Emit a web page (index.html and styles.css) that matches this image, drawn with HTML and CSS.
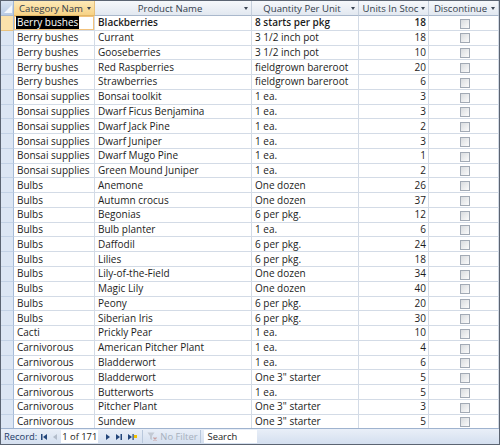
FILE: index.html
```html
<!DOCTYPE html>
<html lang="en">
<head>
  <meta charset="utf-8">
  <title>Products</title>
  <link rel="stylesheet" href="styles.css">
</head>
<body>
<div class="datasheet">
  <div class="grid-wrap">
    <table class="grid">
      <colgroup>
        <col class="c-sel"><col class="c-cat"><col class="c-prod"><col class="c-qty"><col class="c-units"><col class="c-disc">
      </colgroup>
      <thead>
        <tr>
          <th class="corner"><svg width="13" height="13" viewBox="0 0 13 13"><polygon points="11,3 11,11 3,11" fill="#f4f8fd"/></svg></th>
          <th class="active"><div class="hd"><span class="lbl">Category Nam</span><i class="drop"></i></div></th>
          <th><div class="hd"><span class="lbl">Product Name</span><i class="drop"></i></div></th>
          <th><div class="hd"><span class="lbl">Quantity Per Unit</span><i class="drop"></i></div></th>
          <th><div class="hd"><span class="lbl">Units In Stoc</span><i class="drop"></i></div></th>
          <th><div class="hd"><span class="lbl">Discontinue</span><i class="drop"></i></div></th>
        </tr>
      </thead>
      <tbody>
        <tr class="current"><td class="sel"></td><td class="cur"><span class="hilite">Berry bushes</span></td><td>Blackberries</td><td>8 starts per pkg</td><td class="num">18</td><td class="chk"><span class="box"></span></td></tr>
        <tr><td class="sel"></td><td>Berry bushes</td><td>Currant</td><td>3 1/2 inch pot</td><td class="num">18</td><td class="chk"><span class="box"></span></td></tr>
        <tr><td class="sel"></td><td>Berry bushes</td><td>Gooseberries</td><td>3 1/2 inch pot</td><td class="num">10</td><td class="chk"><span class="box"></span></td></tr>
        <tr><td class="sel"></td><td>Berry bushes</td><td>Red Raspberries</td><td>fieldgrown bareroot</td><td class="num">20</td><td class="chk"><span class="box"></span></td></tr>
        <tr><td class="sel"></td><td>Berry bushes</td><td>Strawberries</td><td>fieldgrown bareroot</td><td class="num">6</td><td class="chk"><span class="box"></span></td></tr>
        <tr><td class="sel"></td><td>Bonsai supplies</td><td>Bonsai toolkit</td><td>1 ea.</td><td class="num">3</td><td class="chk"><span class="box"></span></td></tr>
        <tr><td class="sel"></td><td>Bonsai supplies</td><td>Dwarf Ficus Benjamina</td><td>1 ea.</td><td class="num">3</td><td class="chk"><span class="box"></span></td></tr>
        <tr><td class="sel"></td><td>Bonsai supplies</td><td>Dwarf Jack Pine</td><td>1 ea.</td><td class="num">2</td><td class="chk"><span class="box"></span></td></tr>
        <tr><td class="sel"></td><td>Bonsai supplies</td><td>Dwarf Juniper</td><td>1 ea.</td><td class="num">3</td><td class="chk"><span class="box"></span></td></tr>
        <tr><td class="sel"></td><td>Bonsai supplies</td><td>Dwarf Mugo Pine</td><td>1 ea.</td><td class="num">1</td><td class="chk"><span class="box"></span></td></tr>
        <tr><td class="sel"></td><td>Bonsai supplies</td><td>Green Mound Juniper</td><td>1 ea.</td><td class="num">2</td><td class="chk"><span class="box"></span></td></tr>
        <tr><td class="sel"></td><td>Bulbs</td><td>Anemone</td><td>One dozen</td><td class="num">26</td><td class="chk"><span class="box"></span></td></tr>
        <tr><td class="sel"></td><td>Bulbs</td><td>Autumn crocus</td><td>One dozen</td><td class="num">37</td><td class="chk"><span class="box"></span></td></tr>
        <tr><td class="sel"></td><td>Bulbs</td><td>Begonias</td><td>6 per pkg.</td><td class="num">12</td><td class="chk"><span class="box"></span></td></tr>
        <tr><td class="sel"></td><td>Bulbs</td><td>Bulb planter</td><td>1 ea.</td><td class="num">6</td><td class="chk"><span class="box"></span></td></tr>
        <tr><td class="sel"></td><td>Bulbs</td><td>Daffodil</td><td>6 per pkg.</td><td class="num">24</td><td class="chk"><span class="box"></span></td></tr>
        <tr><td class="sel"></td><td>Bulbs</td><td>Lilies</td><td>6 per pkg.</td><td class="num">18</td><td class="chk"><span class="box"></span></td></tr>
        <tr><td class="sel"></td><td>Bulbs</td><td>Lily-of-the-Field</td><td>One dozen</td><td class="num">34</td><td class="chk"><span class="box"></span></td></tr>
        <tr><td class="sel"></td><td>Bulbs</td><td>Magic Lily</td><td>One dozen</td><td class="num">40</td><td class="chk"><span class="box"></span></td></tr>
        <tr><td class="sel"></td><td>Bulbs</td><td>Peony</td><td>6 per pkg.</td><td class="num">20</td><td class="chk"><span class="box"></span></td></tr>
        <tr><td class="sel"></td><td>Bulbs</td><td>Siberian Iris</td><td>6 per pkg.</td><td class="num">30</td><td class="chk"><span class="box"></span></td></tr>
        <tr><td class="sel"></td><td>Cacti</td><td>Prickly Pear</td><td>1 ea.</td><td class="num">10</td><td class="chk"><span class="box"></span></td></tr>
        <tr><td class="sel"></td><td>Carnivorous</td><td>American Pitcher Plant</td><td>1 ea.</td><td class="num">4</td><td class="chk"><span class="box"></span></td></tr>
        <tr><td class="sel"></td><td>Carnivorous</td><td>Bladderwort</td><td>1 ea.</td><td class="num">6</td><td class="chk"><span class="box"></span></td></tr>
        <tr><td class="sel"></td><td>Carnivorous</td><td>Bladderwort</td><td>One 3" starter</td><td class="num">5</td><td class="chk"><span class="box"></span></td></tr>
        <tr><td class="sel"></td><td>Carnivorous</td><td>Butterworts</td><td>1 ea.</td><td class="num">5</td><td class="chk"><span class="box"></span></td></tr>
        <tr><td class="sel"></td><td>Carnivorous</td><td>Pitcher Plant</td><td>One 3" starter</td><td class="num">3</td><td class="chk"><span class="box"></span></td></tr>
        <tr><td class="sel"></td><td>Carnivorous</td><td>Sundew</td><td>One 3" starter</td><td class="num">5</td><td class="chk"><span class="box"></span></td></tr>
      </tbody>
    </table>
  </div>

  <div class="navbar">
    <span class="nav-label">Record:</span>
    <svg class="nav-btn" width="8" height="8" viewBox="0 0 8 8"><rect x="1" y="1" width="1.5" height="6" fill="#23467a"/><polygon points="7,1 7,7 3,4" fill="#23467a"/></svg>
    <svg class="nav-btn" width="6" height="8" viewBox="0 0 6 8"><polygon points="5,1 5,7 1,4" fill="#b3bdcb"/></svg>
    <span class="nav-pos">1 of 171</span>
    <svg class="nav-btn" width="6" height="8" viewBox="0 0 6 8"><polygon points="1,1 1,7 5,4" fill="#23467a"/></svg>
    <svg class="nav-btn" width="8" height="8" viewBox="0 0 8 8"><polygon points="1,1 1,7 5,4" fill="#23467a"/><rect x="5.5" y="1" width="1.5" height="6" fill="#23467a"/></svg>
    <svg class="nav-btn" width="10" height="8" viewBox="0 0 10 8"><polygon points="1,1 1,7 5,4" fill="#23467a"/><rect x="5.5" y="1" width="1.2" height="6" fill="#23467a"/><rect x="7" y="2" width="3" height="3" fill="#f2c200"/></svg>
    <span class="nav-filter">
      <svg width="10" height="9" viewBox="0 0 10 9"><polygon points="0.5,0.5 7.5,0.5 5,4 5,8 3,7 3,4" fill="#c3cad4"/><path d="M6.5 5.5 L9.5 8.5 M9.5 5.5 L6.5 8.5" stroke="#c9a0a0" stroke-width="1.2"/></svg>
      No Filter
    </span>
    <span class="nav-search">Search</span>
  </div>
</div>
</body>
</html>
```

FILE: styles.css
```css
* {
    margin: 0;
    padding: 0;
    box-sizing: border-box;
}
body {
    font-family: "Open Sans", "Noto Sans", sans-serif;
    font-size: 10px;
    background: #fff;
}

.datasheet {
    width: 500px;
    height: 445px;
    border: 1px solid #5b6472;
    display: flex;
    flex-direction: column;
    overflow: hidden;
}
.grid-wrap {
    flex: 1;
    overflow: hidden;
}

/* datasheet grid */
.grid {
    width: 498px;
    table-layout: fixed;
    border-collapse: separate;
    border-spacing: 0;
}
.c-sel   { width: 13px; }
.c-cat   { width: 81px; }
.c-prod  { width: 157px; }
.c-qty   { width: 107px; }
.c-units { width: 70px; }
.c-disc  { width: 70px; }

.grid th, .grid td {
    white-space: nowrap;
    overflow: hidden;
    padding: 0 3px;
    line-height: 13px;
    text-align: left;
}
.grid tbody tr {
    height: 14.78px;
}
.grid td {
    color: #1c1c1c;
    border-right: 1px solid #d3dbe6;
    border-bottom: 1px solid #d3dbe6;
}
.grid thead tr {
    height: 15px;
}
.grid th {
    font-size: 9.6px;
    font-weight: normal;
    color: #333d4c;
    background: linear-gradient(#f6f8fb, #e2e8f0);
    border-right: 1px solid #c5cfdc;
    border-bottom: 1px solid #a9b8cc;
    padding: 0 0 0 3px;
}
.grid th.active {
    background: linear-gradient(#fde9b8, #f7d285);
    border-right-color: #e7c07c;
    border-bottom-color: #e3b865;
}
.grid th.corner {
    padding: 0;
    background: linear-gradient(#d9e4f2, #b8cbe5);
    border-right-color: #9fb4d2;
}
.grid th.corner svg {
    display: block;
}
.hd {
    display: flex;
    align-items: center;
}
.hd .lbl {
    flex: 1;
    overflow: hidden;
    text-align: center;
    white-space: nowrap;
}
.drop {
    flex: none;
    width: 0;
    height: 0;
    margin: 1px 3px 0 2px;
    border-left: 2.5px solid transparent;
    border-right: 2.5px solid transparent;
    border-top: 3px solid #3d4654;
}

.grid td.sel {
    padding: 0;
    background: #dce6f4;
    border-right: 1px solid #a6bbd8;
    border-bottom: 1px solid #c3d2e6;
}
.grid tr.current td.sel {
    background: #fbe2ab;
    border-bottom-color: #e8c27e;
}
.grid tr.current td {
    font-weight: 600;
}
.grid tr.current td.cur {
    font-weight: normal;
    padding-left: 2px;
    box-shadow: inset 0 0 0 1px #f2c27c;
}
.hilite {
    background: #000;
    color: #fff;
    padding: 0 1px;
}
.grid td.num {
    text-align: right;
    padding-right: 2px;
}
.grid td.chk {
    text-align: center;
    padding: 0;
}
.box {
    display: inline-block;
    width: 10px;
    height: 10px;
    border: 1px solid #a2aab5;
    background: linear-gradient(135deg, #d9dcdf, #fbfbfb);
    vertical-align: middle;
    margin-left: 2px;
}

/* record navigation bar */
.navbar {
    height: 16px;
    display: flex;
    align-items: center;
    padding-left: 3px;
    font-size: 9.4px;
    white-space: nowrap;
    background: linear-gradient(#e9eff8, #d4dfef);
    border-top: 1px solid #9fb3cf;
    color: #1f3c68;
}
.nav-label {
    margin-right: 1px;
}
.nav-btn {
    flex: none;
    margin: 0 2px;
}
.nav-pos {
    flex: none;
    height: 13px;
    line-height: 13px;
    padding: 0 1px;
    margin: 0 5px 0 1px;
    background: #fff;
    color: #1a1a1a;
}
.nav-filter {
    display: flex;
    align-items: center;
    gap: 3px;
    height: 13px;
    margin-left: 3px;
    padding: 0 3px 0 4px;
    color: #a7b0bd;
    border-left: 1px solid #b9c8dc;
    border-right: 1px solid #b9c8dc;
}
.nav-search {
    flex: none;
    width: 53px;
    height: 13px;
    line-height: 13px;
    margin-left: 3px;
    padding-left: 3px;
    background: #fff;
    color: #1a1a1a;
}
```
